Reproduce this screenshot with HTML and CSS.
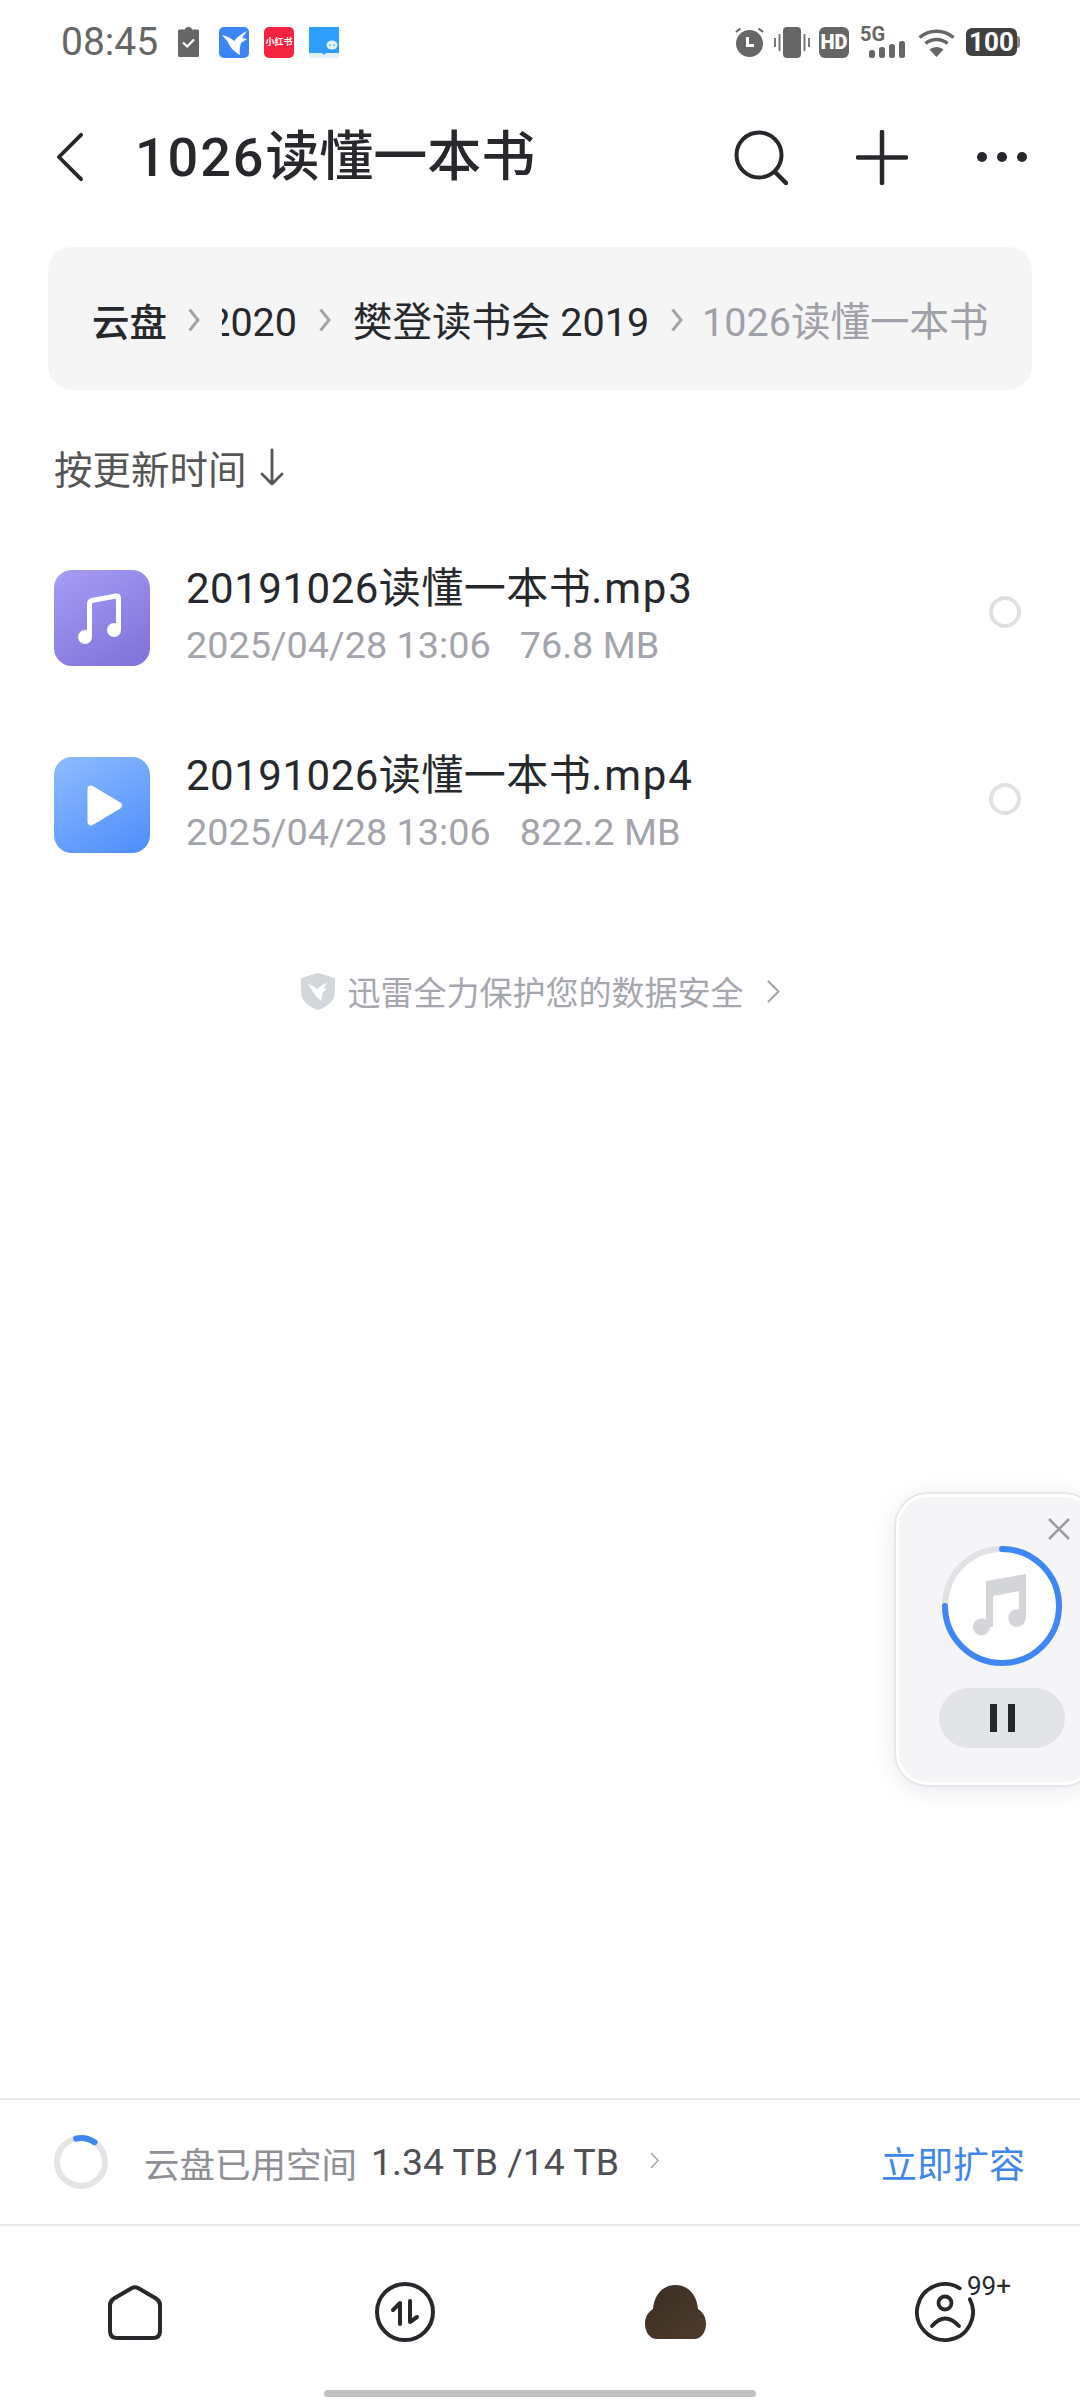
FILE: index.html
```html
<!DOCTYPE html>
<html lang="zh-CN">
<head>
    <meta charset="UTF-8">
    <meta name="viewport" content="width=device-width, initial-scale=1.0">
    <title>1026读懂一本书</title>
    <link rel="stylesheet" href="styles.css">
</head>
<body>
    <div class="page">
        <!-- status bar -->
        <div class="status-bar">
            <div class="status-left">
                <span class="time">08:45</span>
                <svg class="ic-clip" viewBox="0 0 21 30"><path fill="#666" d="M7 2.500Q7 0 10.500 0T14 2.500H19.500Q21 2.500 21 4V28.500Q21 30 19.500 30H1.500Q0 30 0 28.500V4Q0 2.500 1.500 2.500Z"/><path fill="none" stroke="#fff" stroke-width="2.200" d="M5 15.500L9.200 19.500L16 12.500"/></svg>
                <svg class="ic-app" viewBox="0 0 30 31"><rect width="30" height="31" rx="5" fill="#3d84f7"/><path fill="#fff" d="M3 8C8 9 12 11 15 14C18 10 22 7 28 4L23 11L28 12L22 16C21 20 20 24 21 28C15 25 10 19 9 15Z"/></svg>
                <span class="ic-xhs">小红书</span>
                <svg class="ic-app" viewBox="0 0 30 31"><rect width="30" height="31" fill="#2f9dfb"/><path fill="#e3f1fb" d="M0 26H13L15 28L17 26H30V31H0Z"/><ellipse cx="23" cy="18" rx="5.500" ry="4.500" fill="#e3f1fb"/><circle cx="21" cy="18" r=".8" fill="#2f9dfb"/><circle cx="25" cy="18" r=".8" fill="#2f9dfb"/></svg>
            </div>
            <div class="status-right">
                <svg class="ic-alarm" viewBox="0 0 29 30"><circle cx="14.500" cy="16.500" r="13.500" fill="#666"/><path fill="none" stroke="#666" stroke-width="2.200" d="M1 5L5.500 1.500M28 5L23.500 1.500"/><path fill="none" stroke="#fff" stroke-width="3" d="M12.500 10V18.500H19"/></svg>
                <svg class="ic-vibrate" viewBox="0 0 36 31"><rect x="9" width="18" height="31" rx="4" fill="#666"/><path stroke="#777" stroke-width="2" d="M1 11V20M5.500 7V24M30.500 7V24M35 11V20"/></svg>
                <span class="ic-hd">HD</span>
                <span class="ic-net">
                    <span class="net-label">5G</span>
                    <svg class="ic-signal" viewBox="0 0 36 17"><rect y="9" width="6" height="8" rx="2.500" fill="#666"/><rect x="10" y="6" width="6" height="11" rx="2.500" fill="#666"/><rect x="20" y="3" width="6" height="14" rx="2.500" fill="#666"/><rect x="30" width="6" height="17" rx="2.500" fill="#666"/></svg>
                </span>
                <svg class="ic-wifi" viewBox="0 0 37 30"><g fill="none" stroke="#666" stroke-width="3.500"><path d="M1.500 10.500C11 2 26 2 35.500 10.500"/><path d="M7.500 16.500C13.500 11 23.500 11 29.500 16.500"/></g><path fill="#666" d="M18.500 30L11.500 22.500C15.500 19 21.500 19 25.500 22.500Z"/></svg>
                <span class="battery"><span class="battery-body">100</span><span class="battery-cap"></span></span>
            </div>
        </div>

        <!-- title bar -->
        <div class="top-bar">
            <svg class="ic-back" viewBox="0 0 28 52"><path fill="none" stroke="#26282c" stroke-width="4" stroke-linecap="round" stroke-linejoin="round" d="M26 3L3 26L26 49"/></svg>
            <h1 class="page-title"><span class="title-num">1026</span>读懂一本书</h1>
            <svg class="ic-search" viewBox="0 0 54 55"><circle cx="25" cy="25" r="22.500" fill="none" stroke="#26282c" stroke-width="4"/><path stroke="#26282c" stroke-width="4.500" stroke-linecap="round" d="M41 42L52 53"/></svg>
            <svg class="ic-plus" viewBox="0 0 52 55"><path stroke="#26282c" stroke-width="4.500" stroke-linecap="round" d="M26 2V53M2 27.500H50"/></svg>
            <svg class="ic-more" viewBox="0 0 50 10"><circle cx="5" cy="5" r="5" fill="#26282c"/><circle cx="25" cy="5" r="5" fill="#26282c"/><circle cx="45" cy="5" r="5" fill="#26282c"/></svg>
        </div>

        <!-- path -->
        <div class="crumbs">
            <span class="crumb crumb-root">云盘</span>
            <svg class="crumb-sep" viewBox="0 0 12 24"><path fill="none" stroke="#a3a4ab" stroke-width="3" d="M1.500 1.500L10 12L1.500 22.500"/></svg>
            <span class="crumb-clip"><span class="crumb">2020</span></span>
            <svg class="crumb-sep" viewBox="0 0 12 24"><path fill="none" stroke="#a3a4ab" stroke-width="3" d="M1.500 1.500L10 12L1.500 22.500"/></svg>
            <span class="crumb">樊登读书会 2019</span>
            <svg class="crumb-sep" viewBox="0 0 12 24"><path fill="none" stroke="#a3a4ab" stroke-width="3" d="M1.500 1.500L10 12L1.500 22.500"/></svg>
            <span class="crumb crumb-current">1026读懂一本书</span>
        </div>

        <div class="sort">
            <span>按更新时间</span>
            <svg class="ic-sort" viewBox="0 0 24 38"><path fill="none" stroke="#555" stroke-width="2.800" stroke-linecap="round" stroke-linejoin="round" d="M12 2V36M2 26L12 36L22 26"/></svg>
        </div>

        <!-- files -->
        <div class="file-list">
            <div class="file-row">
                <div class="file-icon file-audio">
                    <svg viewBox="0 0 96 96"><path fill="none" stroke="#fff" stroke-width="5" stroke-linejoin="round" d="M35.500 67V34Q35.500 31 38 30.500L62 26Q64.500 25.500 64.500 28V60"/><circle cx="31" cy="67" r="7" fill="#fff"/><circle cx="60" cy="60" r="7" fill="#fff"/></svg>
                </div>
                <div class="file-text">
                    <div class="file-name">20191026读懂一本书<span class="file-ext">.mp3</span></div>
                    <div class="file-meta"><span>2025/04/28 13:06</span><span>76.8 MB</span></div>
                </div>
                <span class="radio"></span>
            </div>
            <div class="file-row">
                <div class="file-icon file-video">
                    <svg viewBox="0 0 96 96"><path fill="#fff" stroke="#fff" stroke-width="7" stroke-linejoin="round" d="M37 32L64.500 48.500L37 65Z"/></svg>
                </div>
                <div class="file-text">
                    <div class="file-name">20191026读懂一本书<span class="file-ext">.mp4</span></div>
                    <div class="file-meta"><span>2025/04/28 13:06</span><span>822.2 MB</span></div>
                </div>
                <span class="radio"></span>
            </div>
        </div>

        <div class="secure">
            <svg class="ic-shield" viewBox="0 0 34 37"><path fill="#d3d6da" d="M17 0L34 5V19C34 28 26 34 17 37C8 34 0 28 0 19V5Z"/><path fill="#fff" d="M7 11C11 12 14 14 16.500 16C19 13 22 11 26 10L23 15L26 16L22 19C21 22 20.500 25 21 28C16 25 12 20 11 17Z"/></svg>
            <span class="secure-text">迅雷全力保护您的数据安全</span>
            <svg class="ic-secure-more" viewBox="0 0 13 23"><path fill="none" stroke="#a6a7ae" stroke-width="2.200" stroke-linecap="round" d="M1.500 1.500L11.500 11.500L1.500 21.500"/></svg>
        </div>

        <!-- storage -->
        <div class="storage">
            <svg class="ic-usage" viewBox="0 0 54 54"><circle cx="27" cy="27" r="24" fill="none" stroke="#e2e4e8" stroke-width="6"/><path fill="none" stroke="#3f87f0" stroke-width="6" stroke-linecap="round" d="M22 3.600A24 24 0 0 1 40.500 7.200"/></svg>
            <span class="storage-label">云盘已用空间</span>
            <span class="storage-value">1.34 TB /14 TB</span>
            <svg class="ic-storage-more" viewBox="0 0 9 17"><path fill="none" stroke="#a3a4ab" stroke-width="1.500" d="M1 1L8 8.500L1 16"/></svg>
            <span class="storage-action">立即扩容</span>
        </div>

        <!-- tabs -->
        <div class="tabs">
            <div class="tab">
                <svg class="ic-home" viewBox="0 0 54 55"><path fill="none" stroke="#26282c" stroke-width="4" d="M23.500 3.200L6 13.500Q2 16 2 20V46Q2 53 9 53H45Q52 53 52 46V20Q52 16 48 13.500L30.500 3.200Q27 1.200 23.500 3.200Z"/></svg>
            </div>
            <div class="tab">
                <svg class="ic-tab" viewBox="0 0 60 60"><circle cx="30" cy="30" r="28" fill="none" stroke="#26282c" stroke-width="4"/><path fill="none" stroke="#26282c" stroke-width="4" stroke-linecap="round" stroke-linejoin="round" d="M18 28L25 21V42M35 19V40L42 35"/></svg>
            </div>
            <div class="tab">
                <svg class="ic-cloud" viewBox="0 0 61 54"><defs><linearGradient id="cloudFill" x1="0" y1="0" x2="1" y2="1"><stop offset="0" stop-color="#3b2d22"/><stop offset="1" stop-color="#4d3c2e"/></linearGradient></defs><path fill="url(#cloudFill)" d="M12 54C4 54 0 46 0 39C0 32 3 27 8 24C9 11 17 0 30.500 0C44 0 52 11 53 24C58 27 61 32 61 39C61 46 57 54 49 54Z"/></svg>
            </div>
            <div class="tab">
                <span class="tab-person">
                    <svg class="ic-tab" viewBox="0 0 60 60"><g fill="none" stroke="#26282c" stroke-width="3.800" stroke-linecap="round"><path d="M54.900 17.300A28 28 0 1 1 44.800 6.300"/><circle cx="30" cy="21" r="6.500"/><path d="M17 44Q30 29 44 44"/></g></svg>
                    <span class="tab-badge">99+</span>
                </span>
            </div>
        </div>
        <div class="home-bar"></div>

        <!-- floating player -->
        <div class="player">
            <svg class="player-close" viewBox="0 0 22 22"><path stroke="#9a9a9f" stroke-width="2.500" d="M1 1L21 21M21 1L1 21"/></svg>
            <svg class="player-disc" viewBox="0 0 120 120">
                <circle cx="60" cy="60" r="57" fill="#fff" stroke="#e0e2e6" stroke-width="6"/>
                <path fill="none" stroke="#3f87f7" stroke-width="6" stroke-linecap="round" d="M60 3A57 57 0 1 1 3 60"/>
                <g transform="translate(31 28)" fill="#d3d5d9"><path d="M13 7L53 0V44H46V17L20 22V53H13Z"/><circle cx="8.500" cy="53" r="8.500"/><circle cx="44" cy="44" r="8.700"/></g>
            </svg>
            <div class="player-pause"><span></span><span></span></div>
        </div>
    </div>
</body>
</html>
```
FILE: styles.css
```css
* {
    box-sizing: border-box;
}
body {
    margin: 0;
    padding: 0;
    background-color: #fff;
    font-family: Roboto, "Noto Sans CJK SC", sans-serif;
    color: #26282c;
}
svg {
    display: block;
    flex-shrink: 0;
}
.page {
    position: relative;
    display: flex;
    flex-direction: column;
    width: 1080px;
    height: 2400px;
    overflow: hidden;
}

/* status bar */
.status-bar {
    display: flex;
    justify-content: space-between;
    align-items: center;
    height: 84px;
    padding: 0 60px 0 61px;
}
.status-left,
.status-right {
    display: flex;
    align-items: center;
}
.time {
    font-size: 39px;
    line-height: 44px;
    color: #666;
    margin-right: 20px;
}
.ic-clip {
    width: 21px;
    height: 30px;
    margin-right: 20px;
}
.ic-app {
    width: 30px;
    height: 31px;
}
.ic-xhs {
    width: 30px;
    height: 31px;
    margin: 0 15px;
    border-radius: 5px;
    background-color: #f4233f;
    color: #fff;
    font-size: 9px;
    font-weight: 700;
    line-height: 31px;
    text-align: center;
    white-space: nowrap;
}
.ic-alarm {
    width: 29px;
    height: 30px;
    margin-right: 10px;
}
.ic-vibrate {
    width: 36px;
    height: 31px;
    margin-right: 9px;
}
.ic-hd {
    width: 30px;
    height: 31px;
    margin-right: 11px;
    border-radius: 6px;
    background-color: #666;
    color: #fff;
    font-size: 20px;
    font-weight: 900;
    line-height: 31px;
    text-align: center;
}
.ic-net {
    display: block;
    position: relative;
    width: 45px;
    height: 31px;
    margin-right: 13px;
}
.net-label {
    position: absolute;
    left: 0;
    top: -3px;
    font-size: 20px;
    font-weight: 700;
    line-height: 20px;
    color: #666;
}
.ic-signal {
    position: absolute;
    right: 0;
    bottom: 0;
    width: 36px;
    height: 17px;
}
.ic-wifi {
    width: 37px;
    height: 30px;
    margin-right: 11px;
}
.battery {
    display: flex;
    align-items: center;
}
.battery-body {
    width: 51px;
    height: 28px;
    border-radius: 6px;
    background-color: #404040;
    color: #fff;
    font-size: 26px;
    font-weight: 700;
    line-height: 28px;
    text-align: center;
}
.battery-cap {
    width: 3px;
    height: 12px;
    border-radius: 0 3px 3px 0;
    background-color: #8a8a8a;
}

/* title bar */
.top-bar {
    display: flex;
    align-items: center;
    height: 146px;
    padding-left: 56px;
}
.ic-back {
    width: 27px;
    height: 50px;
}
.page-title {
    flex: 1;
    margin: 0 0 0 52px;
    padding-top: 2px;
    font-size: 54px;
    font-weight: 500;
    line-height: 60px;
}
.title-num {
    letter-spacing: 1.900px;
}
.ic-search {
    width: 54px;
    height: 55px;
    margin-right: 68px;
}
.ic-plus {
    width: 52px;
    height: 55px;
    margin-right: 69px;
}
.ic-more {
    width: 50px;
    height: 10px;
    margin-right: 53px;
}

/* path */
.crumbs {
    display: flex;
    align-items: center;
    height: 143px;
    margin: 17px 48px 0;
    padding: 8px 0 0 44px;
    border-radius: 24px;
    background-color: #f5f5f6;
    font-size: 39.500px;
    white-space: nowrap;
}
.crumb {
    line-height: 48px;
}
.crumb-root {
    margin-right: -1px;
    font-size: 37.500px;
    font-weight: 500;
}
.crumb-sep {
    width: 12px;
    height: 24px;
    margin: -6px 22px 0;
}
.crumb-clip {
    display: flex;
    justify-content: flex-end;
    width: 75px;
    overflow: hidden;
}
.crumb-current {
    margin-left: -3px;
    color: #a0a0a8;
}

.sort {
    display: flex;
    align-items: center;
    gap: 13px;
    height: 48px;
    margin-top: 53px;
    padding-left: 54px;
    font-size: 38.500px;
    color: #555;
}
.ic-sort {
    width: 24px;
    height: 38px;
}

/* files */
.file-list {
    margin-top: 33px;
}
.file-row {
    display: flex;
    align-items: center;
    height: 187px;
    padding: 0 59px 0 54px;
}
.file-icon {
    width: 96px;
    height: 96px;
    margin-right: 36px;
    border-radius: 18px;
}
.file-audio {
    background: linear-gradient(150deg, #a59df5, #7e70d8);
}
.file-video {
    background: linear-gradient(150deg, #8fbcff, #4c8cfb);
}
.file-text {
    flex: 1;
    padding-bottom: 2px;
}
.file-name {
    font-size: 42px;
    line-height: 58px;
    letter-spacing: .5px;
}
.file-ext {
    letter-spacing: 1.800px;
}
.file-meta {
    display: flex;
    gap: 29px;
    margin-top: -2px;
    font-size: 37.800px;
    line-height: 58px;
    color: #a3a4ab;
}
.radio {
    width: 32px;
    height: 32px;
    margin-bottom: 11px;
    border: 4px solid #dfe1e5;
    border-radius: 50%;
}

.secure {
    display: flex;
    justify-content: center;
    align-items: center;
    height: 48px;
    margin-top: 69px;
    font-size: 33px;
    color: #a6a7ae;
}
.ic-shield {
    width: 34px;
    height: 37px;
    margin-right: 13px;
}
.ic-secure-more {
    width: 13px;
    height: 23px;
    margin-left: 23px;
}

/* storage */
.storage {
    display: flex;
    align-items: center;
    height: 128px;
    margin-top: auto;
    padding: 0 55px 0 54px;
    border-top: 2px solid #e5e7ea;
    border-bottom: 2px solid #e5e7ea;
    font-size: 36px;
}
.ic-usage {
    width: 54px;
    height: 54px;
    margin-right: 36px;
}
.storage-label {
    margin-right: 14px;
    font-size: 35.500px;
    color: #8e9095;
}
.storage-value {
    font-size: 37.400px;
    color: #4f5053;
}
.ic-storage-more {
    width: 9px;
    height: 17px;
    margin: -4px 0 0 31px;
}
.storage-action {
    margin-left: auto;
    color: #3f87ea;
}

/* tabs */
.tabs {
    display: grid;
    grid-template-columns: repeat(4, 1fr);
    align-items: center;
    height: 164px;
    padding-top: 8px;
}
.tab {
    display: flex;
    justify-content: center;
}
.ic-home {
    width: 54px;
    height: 55px;
}
.ic-tab {
    width: 60px;
    height: 60px;
}
.ic-cloud {
    width: 61px;
    height: 54px;
}
.tab-person {
    position: relative;
}
.tab-badge {
    position: absolute;
    left: 52px;
    top: -11px;
    font-size: 26px;
    line-height: 30px;
}
.home-bar {
    width: 432px;
    height: 7px;
    margin: 0 auto 3px;
    border-radius: 4px;
    background-color: #c2c2c2;
}

/* floating player */
.player {
    position: absolute;
    left: 896px;
    top: 1494px;
    display: flex;
    flex-direction: column;
    align-items: center;
    width: 200px;
    height: 291px;
    padding: 49px 0 0 12px;
    border: 3px solid #fff;
    border-radius: 32px;
    background-color: #f5f5f7;
    box-shadow: 0 0 0 2px #e5e7ea, 0 4px 24px rgba(60, 70, 90, .14);
}
.player-close {
    position: absolute;
    left: 149px;
    top: 21px;
    width: 22px;
    height: 22px;
}
.player-disc {
    width: 120px;
    height: 120px;
}
.player-pause {
    display: flex;
    justify-content: center;
    align-items: center;
    gap: 11px;
    width: 126px;
    height: 60px;
    margin-top: 22px;
    border-radius: 30px;
    background-color: #e2e4e8;
}
.player-pause span {
    width: 7px;
    height: 28px;
    background-color: #24272b;
}
```
